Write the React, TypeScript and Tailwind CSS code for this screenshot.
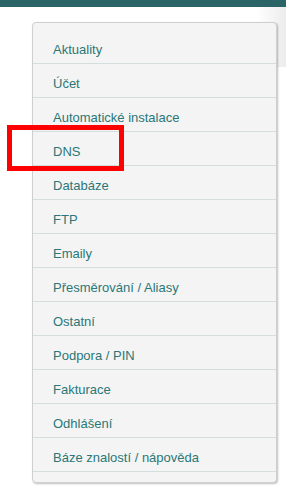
import React from 'react';

const items = [
  'Aktuality',
  'Účet',
  'Automatické instalace',
  'DNS',
  'Databáze',
  'FTP',
  'Emaily',
  'Přesměrování / Aliasy',
  'Ostatní',
  'Podpora / PIN',
  'Fakturace',
  'Odhlášení',
  'Báze znalostí / nápověda',
];

export default function App() {
  return (
    <div className="relative h-[487px] w-[286px] overflow-hidden bg-white font-['Liberation_Sans',Arial,sans-serif]">
      <div className="h-[7px] bg-[#2b6466]" />
      <div className="absolute right-0 top-[7px] h-[60px] w-[30px] bg-[linear-gradient(to_right,rgba(255,255,255,0),#ececec)]" />
      <div className="relative ml-[32px] mt-[15px] w-[245px] rounded-[4px] border border-[#cfcfcf] bg-[#f4f4f4] pb-[10px] pt-[7px] shadow-[1px_1px_2px_rgba(0,0,0,0.25)]">
        <ul>
          {items.map((item) => (
            <li key={item} className="border-b border-[#d3dfdc]">
              <a className="block pb-[3px] pl-[20px] pt-[10px] text-[13px] leading-[20px] text-[#2b7777]">
                {item}
              </a>
            </li>
          ))}
        </ul>
      </div>
      {/* red highlight annotation */}
      <div className="absolute left-[7px] top-[125px] h-[46px] w-[117px] border-[5px] border-[#ff0000]" />
    </div>
  );
}
